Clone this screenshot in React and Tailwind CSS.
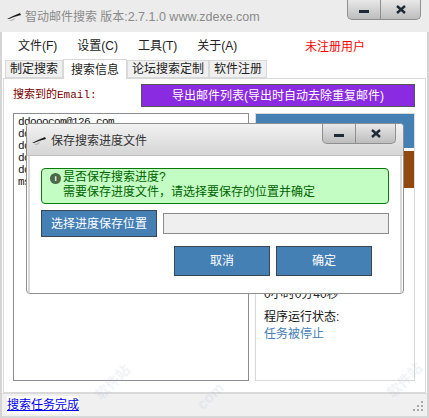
const cjk = "font-['Liberation_Sans','Noto_Sans_CJK_SC',sans-serif]";

const Feather = () => (
  <svg width="14" height="9" viewBox="0 0 14 9" className="shrink-0">
    <path d="M0 6 L6 3 L13 0 L14 2 L7 4 L2 6 Z" fill="#1c1c1c" />
    <path d="M2 8 L8 5 L7 7 L4 8 Z" fill="#b0b0b0" />
  </svg>
);

const WinButtons = () => (
  <div className="flex h-[20px] w-[74px] rounded-b-[5px] border border-t-0 border-[#8f8f8f] bg-gradient-to-b from-[#e8e8e8] to-[#bdbdbd]">
    <div className="flex w-[33px] items-center justify-center border-r border-[#8f8f8f]">
      <div className="mt-[3px] h-[3px] w-[10px] bg-[#1e2a36]" />
    </div>
    <div className="flex flex-1 items-center justify-center">
      <svg width="10" height="9" viewBox="0 0 10 9">
        <path d="M1 1 L9 8 M9 1 L1 8" stroke="#1e2a36" strokeWidth="2.4" />
      </svg>
    </div>
  </div>
);

const Menu = ({ children }) => <span className="whitespace-nowrap text-[12px] text-[#222]">{children}</span>;

const Tab = ({ active, children }) => (
  <div
    className={
      active
        ? "z-10 -mb-px flex h-[20px] items-center border border-b-0 border-[#d9d9d9] bg-white px-[7px] text-[12px] text-[#222]"
        : "flex h-[18px] items-center border border-[#d9d9d9] bg-[#f0f0f0] px-[4px] text-[12px] text-[#222]"
    }
  >
    {children}
  </div>
);

const Btn = ({ className, children }) => (
  <div className={"flex items-center justify-center border border-[#3b4653] bg-[#4580b5] text-[12px] text-white " + className}>
    {children}
  </div>
);

const Mark = ({ className, children }) => (
  <span className={"pointer-events-none absolute -rotate-45 whitespace-nowrap font-bold text-[#9fb6d0] opacity-15 " + className}>
    {children}
  </span>
);

const Grip = () => (
  <svg width="11" height="11" viewBox="0 0 11 11" className="shrink-0">
    <path d="M8 1h2v2H8z M4 5h2v2H4z M8 5h2v2H8z M0 9h2v2H0z M4 9h2v2H4z M8 9h2v2H8z" fill="#a8a8a8" />
  </svg>
);

export default function App() {
  return (
    <div className={"relative flex h-[418px] w-[429px] flex-col overflow-hidden bg-white " + cjk}>
      {/* main window */}
      <div className="flex h-[32px] shrink-0 items-start justify-between bg-[#ececec] pl-[7px] pr-[8px]">
        <div className="flex items-center gap-[4px] pt-[9px] text-[12px] leading-[16px] text-[#8a8a8a]">
          <Feather />
          <span className="whitespace-nowrap">
            智动邮件搜索 版本:<span className="text-[12.5px]">2.7.1.0 www.zdexe.com</span>
          </span>
        </div>
        <WinButtons />
      </div>
      <div className="flex min-h-0 flex-1 flex-col border-x-[2px] border-b border-[#d4d4d4] bg-white">
        <div className="flex h-[27px] shrink-0 items-center pl-[16px]">
          <div className="flex w-[287px] gap-[20px]">
            <Menu>文件(F)</Menu>
            <Menu>设置(C)</Menu>
            <Menu>工具(T)</Menu>
            <Menu>关于(A)</Menu>
          </div>
          <span className="mt-[2px] text-[12px] text-[#f00]">未注册用户</span>
        </div>
        <div className="flex h-[19px] shrink-0 items-end pl-[3px]">
          <Tab>制定搜索</Tab>
          <Tab active>搜索信息</Tab>
          <Tab>论坛搜索定制</Tab>
          <Tab>软件注册</Tab>
        </div>
        <div className="mx-[1px] flex min-h-0 flex-1 flex-col border border-[#d9d9d9] pb-[11px] pl-[9px] pr-[10px]">
          <div className="flex h-[34px] shrink-0 items-start justify-between pt-[5px]">
            <span className="mt-[4px] font-['Liberation_Mono','Noto_Sans_CJK_SC',monospace] text-[11px] leading-[14px] text-[#7a0000]">搜索到的Email:</span>
            <div className="flex h-[23px] w-[274px] items-center justify-center border border-[#555] bg-[#8a2be2] text-[12px] text-white">
              导出邮件列表(导出时自动去除重复邮件)
            </div>
          </div>
          <div className="flex min-h-0 flex-1 gap-[6px]">
            <div className="w-[236px] border border-[#8c8c96] px-[4px] py-[2px] font-['Liberation_Mono',monospace] text-[11px] leading-[12px] tracking-[-0.6px] text-[#111]">
              <div>ddooocom@126.com</div>
              <div>do</div>
              <div>do</div>
              <div>do</div>
              <div>do</div>
              <div>ms</div>
            </div>
            <div className="flex flex-1 flex-col border border-[#d9d9d9]">
              <div className="h-[34px] bg-[#4580b5]" />
              <div className="mt-[3px] h-[37px] bg-[#91490f]" />
              <div className="mt-auto px-[8px] pb-[37px] text-[12px] leading-[17px]">
                <div className="text-[#222]">0小时0分40秒</div>
                <div className="mt-[6px] text-[#111]">程序运行状态:</div>
                <div className="text-[#4580b5]">任务被停止</div>
              </div>
            </div>
          </div>
        </div>
        <div className="flex h-[24px] shrink-0 items-center justify-between border-y border-[#d9d9d9] bg-[#f0f0f0] pl-[5px] pr-[3px]">
          <span className="bg-white text-[12px] leading-[18px] text-[#0000ee] underline">搜索任务完成</span>
          <Grip />
        </div>
      </div>

      {/* save dialog, floats over the window */}
      <div className="absolute left-[26px] top-[123px] w-[378px] overflow-hidden rounded-[4px] border border-[#8f8f8f] bg-white">
        <div className="flex h-[32px] items-start justify-between border-b border-[#c0c0c0] bg-gradient-to-b from-[#f2f2f2] to-[#d5d5d5] pl-[5px] pr-[7px]">
          <div className="flex items-center gap-[5px] pt-[9px] text-[12px] leading-[16px] text-[#333]">
            <Feather />
            <span>保存搜索进度文件</span>
          </div>
          <WinButtons />
        </div>
        <div className="mx-[1px] border-x-[2px] border-[#d8d8d8] px-[11px] pb-[17px] pt-[12px]">
          <div className="flex h-[36px] items-start gap-[2px] rounded-[4px] border border-[#0a7a0a] bg-[#c4fdc4] pl-[8px] pr-[7px] py-[1px] text-[12px] leading-[15px] text-[#006400]">
            <div className="mt-[3px] flex size-[11px] shrink-0 items-center justify-center rounded-full bg-[#4a6a4a] text-[8px] font-bold leading-none text-white">i</div>
            <div>
              <div>是否保存搜索进度?</div>
              <div>需要保存进度文件，请选择要保存的位置并确定</div>
            </div>
          </div>
          <div className="mt-[6px] flex items-center gap-[6px]">
            <Btn className="h-[27px] w-[116px]">选择进度保存位置</Btn>
            <div className="h-[21px] flex-1 border border-[#8a8a8a] bg-[#efefef]" />
          </div>
          <div className="mt-[9px] flex justify-end gap-[6px] pr-[17px]">
            <Btn className="h-[30px] w-[96px]">取消</Btn>
            <Btn className="h-[30px] w-[96px]">确定</Btn>
          </div>
        </div>
      </div>

      {/* faint site watermark, bottom of the shot */}
      <Mark className="left-[92px] top-[372px] text-[14px]">软件站</Mark>
      <Mark className="left-[195px] top-[385px] text-[15px]">com</Mark>
      <Mark className="left-[384px] top-[370px] text-[14px]">软件站</Mark>
    </div>
  );
}
